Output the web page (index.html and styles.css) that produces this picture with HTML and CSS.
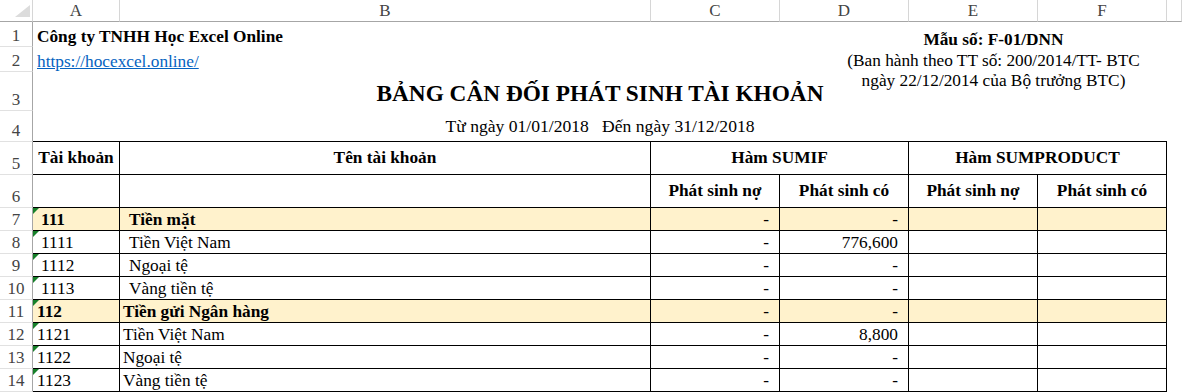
FILE: index.html
```html
<!DOCTYPE html>
<html lang="vi">
<head>
<meta charset="utf-8">
<title>Bảng cân đối phát sinh tài khoản</title>
<link rel="stylesheet" href="styles.css">
</head>
<body>
<div class="sheet">
  <div class="corner"><svg width="15" height="12" viewBox="0 0 15 12"><polygon points="15,0 15,12 0,12" fill="#dcdcdc"/></svg></div>
  <div class="ch">A</div>
  <div class="ch">B</div>
  <div class="ch">C</div>
  <div class="ch">D</div>
  <div class="ch">E</div>
  <div class="ch">F</div>
  <div class="ch"></div>

  <div class="rh">1</div>
  <div class="company">Công ty TNHH Học Excel Online</div>
  <div class="form-no">Mẫu số: F-01/DNN</div>
  <div class="rh">2</div>
  <div class="link"><a href="#">https://hocexcel.online/</a></div>
  <div class="decree"><span>(Ban hành theo TT số: 200/2014/TT- BTC</span><span>ngày 22/12/2014 của Bộ trưởng BTC)</span></div>
  <div class="rh">3</div>
  <div class="title">BẢNG CÂN ĐỐI PHÁT SINH TÀI KHOẢN</div>
  <div class="rh">4</div>
  <div class="period">Từ ngày 01/01/2018   Đến ngày 31/12/2018</div>

  <div class="rh">5</div>
  <div class="t hd">Tài khoản</div>
  <div class="t hd">Tên tài khoản</div>
  <div class="t hd span2">Hàm SUMIF</div>
  <div class="t hd span2">Hàm SUMPRODUCT</div>

  <div class="rh">6</div>
  <div class="t"></div>
  <div class="t"></div>
  <div class="t hd">Phát sinh nợ</div>
  <div class="t hd">Phát sinh có</div>
  <div class="t hd">Phát sinh nợ</div>
  <div class="t hd">Phát sinh có</div>

  <div class="rh">7</div>
  <div class="t a ind acc yl b">111</div>
  <div class="t bn ind yl b">Tiền mặt</div>
  <div class="t num yl">-</div>
  <div class="t num yl">-</div>
  <div class="t yl"></div>
  <div class="t yl"></div>

  <div class="rh">8</div>
  <div class="t a ind acc">1111</div>
  <div class="t bn ind">Tiền Việt Nam</div>
  <div class="t num">-</div>
  <div class="t num">776,600</div>
  <div class="t"></div>
  <div class="t"></div>

  <div class="rh">9</div>
  <div class="t a ind acc">1112</div>
  <div class="t bn ind">Ngoại tệ</div>
  <div class="t num">-</div>
  <div class="t num">-</div>
  <div class="t"></div>
  <div class="t"></div>

  <div class="rh">10</div>
  <div class="t a ind acc">1113</div>
  <div class="t bn ind">Vàng tiền tệ</div>
  <div class="t num">-</div>
  <div class="t num">-</div>
  <div class="t"></div>
  <div class="t"></div>

  <div class="rh">11</div>
  <div class="t a acc yl b">112</div>
  <div class="t bn yl b">Tiền gửi Ngân hàng</div>
  <div class="t num yl">-</div>
  <div class="t num yl">-</div>
  <div class="t yl"></div>
  <div class="t yl"></div>

  <div class="rh">12</div>
  <div class="t a acc">1121</div>
  <div class="t bn">Tiền Việt Nam</div>
  <div class="t num">-</div>
  <div class="t num">8,800</div>
  <div class="t"></div>
  <div class="t"></div>

  <div class="rh">13</div>
  <div class="t a acc">1122</div>
  <div class="t bn">Ngoại tệ</div>
  <div class="t num">-</div>
  <div class="t num">-</div>
  <div class="t"></div>
  <div class="t"></div>

  <div class="rh">14</div>
  <div class="t a acc">1123</div>
  <div class="t bn">Vàng tiền tệ</div>
  <div class="t num">-</div>
  <div class="t num">-</div>
  <div class="t"></div>
  <div class="t"></div>
</div>
</body>
</html>
```

FILE: styles.css
```css
html, body {
  margin: 0;
  padding: 0;
  background: #ffffff;
}

body {
  font-family: "Liberation Serif", "Times New Roman", serif;
  font-size: 17.3px;
  color: #000000;
}

.sheet {
  display: grid;
  grid-template-columns: 33px 87px 531px 129px 129px 129px 129px 1fr;
  grid-template-rows: 22px 25px 25px 39px 31px 33px 33px repeat(8, 23px);
  width: 1182px;
  height: 392px;
  overflow: hidden;
}

.sheet > div {
  box-sizing: border-box;
  min-width: 0;
  display: flex;
  align-items: flex-end;
  white-space: nowrap;
  line-height: 20px;
}

/* headers */
.corner {
  border-right: 1px solid #d6d6d6;
  border-bottom: 1px solid #a6a6a6;
  justify-content: flex-end;
  padding: 0 2px 4px 0;
}

.corner svg {
  display: block;
}

.ch {
  border-right: 1px solid #d6d6d6;
  border-bottom: 1px solid #a6a6a6;
  justify-content: center;
  color: #444444;
  font-size: 17px;
  line-height: 21px;
}

.sheet > .ch {
  align-items: center;
}

.rh {
  grid-column: 1;
  border-right: 1px solid #a6a6a6;
  border-bottom: 1px solid #e1e1e1;
  justify-content: center;
  color: #444444;
  font-size: 17px;
}

/* top area */
.company {
  grid-row: 2;
  grid-column: 2 / 4;
  font-weight: bold;
  padding-left: 4px;
}

.form-no {
  grid-row: 2;
  grid-column: 5 / 8;
  justify-content: center;
  padding-left: 40px;
  font-weight: bold;
  margin-bottom: -3px;
}

.link {
  grid-row: 3;
  grid-column: 2 / 4;
  padding-left: 4px;
}

.link a {
  color: #0563c1;
  text-decoration: underline;
}

.sheet > .decree {
  grid-row: 3 / 5;
  grid-column: 5 / 8;
  flex-direction: column;
  align-items: center;
  justify-content: flex-start;
  padding-left: 40px;
  padding-top: 4px;
  line-height: 20px;
}

.sheet > .title {
  grid-row: 4;
  grid-column: 2 / 8;
  justify-content: center;
  font-weight: bold;
  font-size: 23.3px;
  line-height: 26px;
  padding-bottom: 5px;
}

.sheet > .period {
  grid-row: 5;
  grid-column: 2 / 8;
  justify-content: center;
  border-bottom: 1px solid #000000;
  padding-bottom: 5px;
  white-space: pre;
  font-size: 17.6px;
}

/* table cells */
.t {
  border-right: 1px solid #000000;
  border-bottom: 1px solid #000000;
}

.sheet > .hd {
  font-weight: bold;
  justify-content: center;
  align-items: center;
}

.span2 {
  grid-column: span 2;
}

.num {
  justify-content: flex-end;
  padding-right: 10px;
}

.a {
  padding-left: 4px;
}

.a.ind {
  padding-left: 8px;
}

.bn {
  padding-left: 3px;
}

.bn.ind {
  padding-left: 9px;
}

.b {
  font-weight: bold;
}

.yl {
  background: #fff2cc;
}

.acc {
  position: relative;
}

.acc::before {
  content: "";
  position: absolute;
  left: 0;
  top: 0;
  border-top: 6px solid #17802a;
  border-right: 6px solid transparent;
}
```
